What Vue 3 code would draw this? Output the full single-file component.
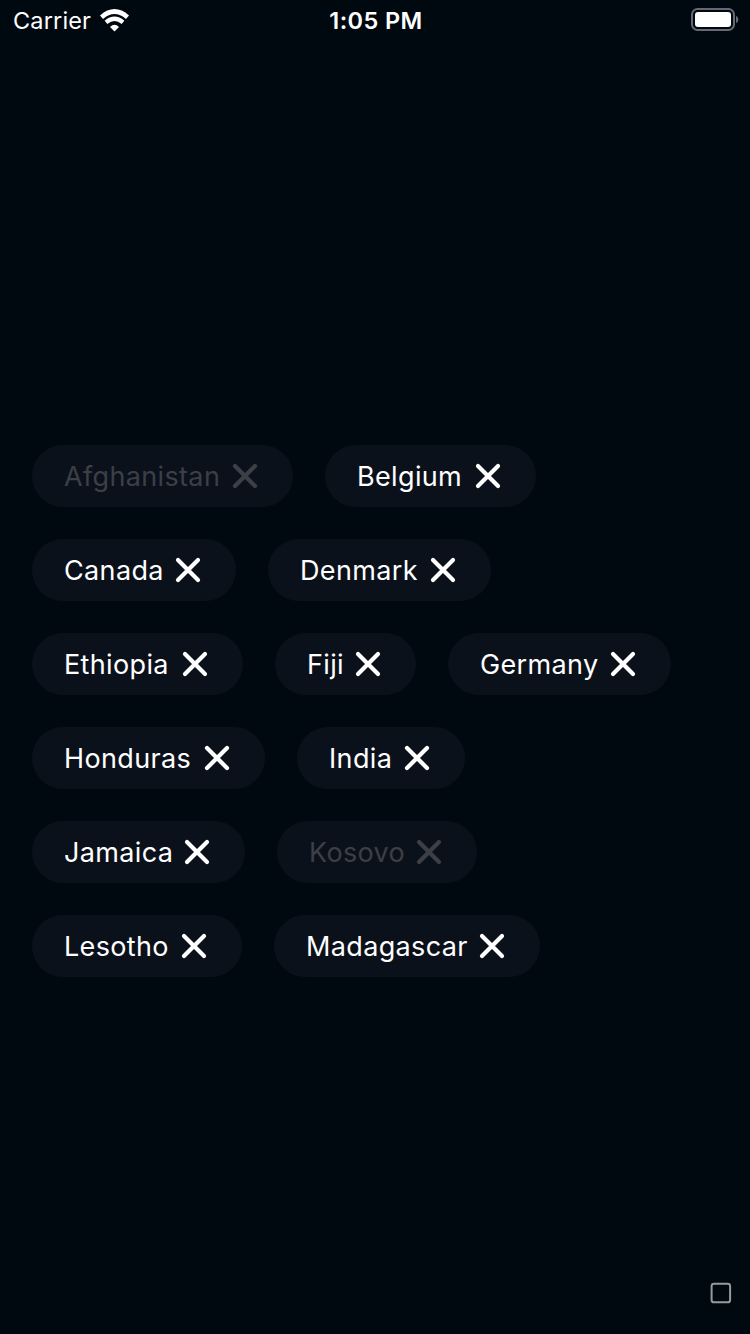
<script setup>
const rows = [
  [{ name: 'Afghanistan', width: 261, off: true }, { name: 'Belgium', width: 211 }],
  [{ name: 'Canada', width: 204 }, { name: 'Denmark', width: 223 }],
  [{ name: 'Ethiopia', width: 211 }, { name: 'Fiji', width: 141 }, { name: 'Germany', width: 223 }],
  [{ name: 'Honduras', width: 233 }, { name: 'India', width: 168 }],
  [{ name: 'Jamaica', width: 213 }, { name: 'Kosovo', width: 200, off: true }],
  [{ name: 'Lesotho', width: 210 }, { name: 'Madagascar', width: 266 }],
]
</script>

<template>
  <div class="screen">
    <header class="status">
      <div class="carrier">
        <span class="network">Carrier</span>
        <svg class="wifi" width="30" height="23" viewBox="0 0 30 23">
          <path d="M1.5 8.2Q14.5-3.2 27.5 8.2" fill="none" stroke="#fff" stroke-width="4.6" />
          <path d="M6 13.4Q14.5 6.2 23 13.4" fill="none" stroke="#fff" stroke-width="4.2" />
          <path d="M14.5 22.4L10 17.9Q14.5 13.4 19 17.9Z" fill="#fff" />
        </svg>
      </div>
      <span class="time">1:05 PM</span>
      <svg class="battery" width="48" height="24" viewBox="0 0 48 24">
        <rect x="1" y="1" width="42" height="21" rx="5.5" fill="none" stroke="#666971" stroke-width="2" />
        <rect x="4" y="4" width="36" height="15" rx="3" fill="#fff" />
        <path d="M45 7.8Q47.4 9 47.4 11.5T45 15.2Z" fill="#666971" />
      </svg>
    </header>
    <main class="chips">
      <div v-for="(row, i) in rows" :key="i" class="row">
        <div v-for="c in row" :key="c.name" class="chip" :class="{ off: c.off }" :style="{ width: c.width + 'px' }">
          <span class="label">{{ c.name }}</span>
          <svg class="close" width="32" height="32" viewBox="0 0 32 32">
            <path d="M6 6L26 26M26 6L6 26" fill="none" stroke="currentColor" stroke-width="4.2" stroke-linecap="round" />
          </svg>
        </div>
      </div>
    </main>
    <footer class="bottom">
      <svg width="22" height="22" viewBox="0 0 22 22">
        <rect x="1.6" y="1.7" width="18.5" height="18.6" rx="2.4" fill="none" stroke="#999a9c" stroke-width="2" />
      </svg>
    </footer>
  </div>
</template>

<style>
body { margin: 0; background: #000810; }
</style>

<style scoped>
.screen {
  width: 750px;
  height: 1334px;
  display: flex;
  flex-direction: column;
  overflow: hidden;
  box-sizing: border-box;
  background: #000810;
  color: #fff;
  font-family: Inter, "Liberation Sans", sans-serif;
}
.status {
  height: 40px;
  display: grid;
  grid-template-columns: 1fr auto 1fr;
  align-items: center;
  padding: 0 11px 0 13px;
  font-size: 23.5px;
  line-height: 38px;
}
.carrier { display: flex; align-items: center; gap: 9px; letter-spacing: 0.15px; }
.network, .time { padding-top: 2px; }
.time { font-weight: 600; font-size: 23.5px; letter-spacing: 0.4px; }
.battery { justify-self: end; }
.chips {
  flex: 1;
  display: flex;
  flex-direction: column;
  gap: 32px;
  padding: 405px 32px 0;
}
.row { display: flex; gap: 32px; }
.chip {
  box-sizing: border-box;
  height: 62px;
  padding: 0 32px;
  border-radius: 31px;
  display: flex;
  align-items: center;
  justify-content: space-between;
  background: #0b111b;
  font-size: 27px;
  letter-spacing: 0.35px;
  white-space: nowrap;
}
.off { color: #3c3f46; }
.close { flex: none; }
.bottom { display: flex; justify-content: flex-end; padding: 0 18px 30px 0; }
</style>
